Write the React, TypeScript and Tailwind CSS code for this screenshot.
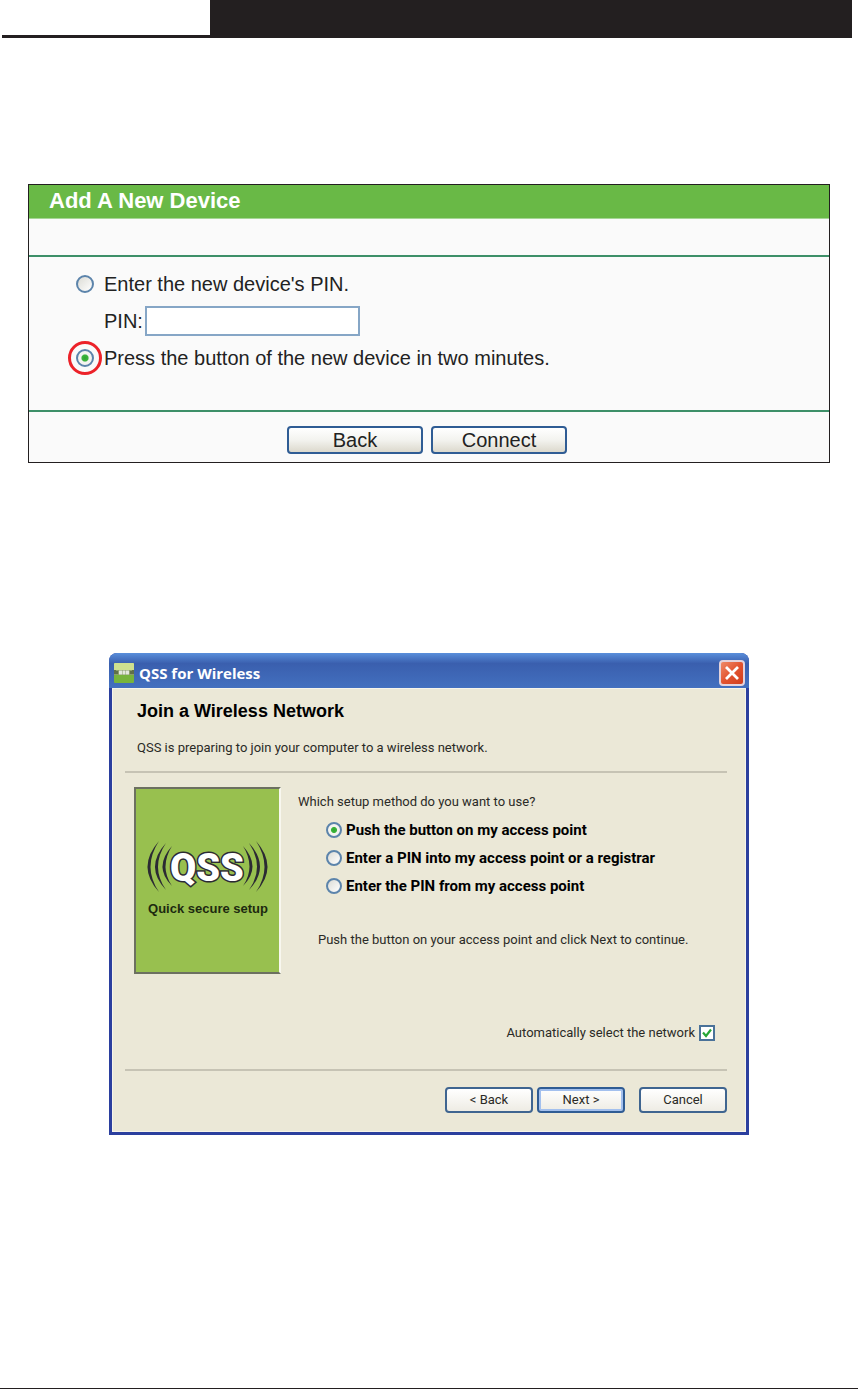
import { useState } from 'react'
import type { ReactNode } from 'react'

const methods = [
  { id: 'push', label: 'Push the button on my access point' },
  { id: 'enter', label: 'Enter a PIN into my access point or a registrar' },
  { id: 'from', label: 'Enter the PIN from my access point' },
]

const radioBase =
  'shrink-0 appearance-none rounded-full border-2 border-[#5c84ab] bg-[linear-gradient(135deg,#dcdcd6,#ffffff)] checked:bg-[radial-gradient(circle,#2fa52f_0,#3cb43c_30%,#f4f4f0_42%)]'

function WideButton({ children }: { children: ReactNode }) {
  return (
    <button
      type="button"
      className="h-7 w-34 rounded-[4px] border-2 border-[#2f5c94] bg-linear-to-b from-white via-[#f3f3ef] to-[#dcd9cd] text-xl leading-5 text-[#222]"
    >
      {children}
    </button>
  )
}

function DialogButton({ children, primary = false }: { children: ReactNode; primary?: boolean }) {
  return (
    <button
      type="button"
      className={
        primary
          ? 'h-[26px] w-22 rounded-[4px] border-2 border-[#2f5c94] bg-linear-to-b from-white to-[#eeece4] leading-5 inset-ring-2 inset-ring-[#a3c0ee]'
          : 'h-[26px] w-22 rounded-[4px] border-2 border-[#3f6590] bg-linear-to-b from-white to-[#eeece4] leading-5'
      }
    >
      {children}
    </button>
  )
}

function Rule() {
  return <hr className="mr-[18px] ml-1 border-t-2 border-[#c6c3b4]" />
}

function AddDevice() {
  const [mode, setMode] = useState('button')

  return (
    <section className="mx-7 border border-[#231f20] bg-[#fafafa] font-['Liberation_Sans',sans-serif] text-xl text-[#222]">
      <h1 className="h-[34px] border-b border-[#a5d695] bg-[#69b946] px-5 text-[22px] leading-8 font-bold text-white">
        Add A New Device
      </h1>
      <div className="h-9" />
      <div className="border-y-2 border-[#3d8f68] pt-2 pb-[34px] pl-[47px]">
        <div className="flex h-[37px] items-center gap-2.5">
          <input
            id="mode-pin"
            type="radio"
            name="mode"
            checked={mode === 'pin'}
            onChange={() => setMode('pin')}
            className={`size-[18px] ${radioBase}`}
          />
          <label htmlFor="mode-pin">Enter the new device's PIN.</label>
        </div>
        <div className="flex h-[37px] items-center gap-0.5 pl-7">
          <label htmlFor="pin">PIN:</label>
          <input id="pin" type="text" className="h-[30px] w-[215px] border-2 border-[#86a6c6] bg-white px-1" />
        </div>
        <div className="flex h-[37px] items-center gap-2.5">
          <span className="relative flex">
            <input
              id="mode-button"
              type="radio"
              name="mode"
              checked={mode === 'button'}
              onChange={() => setMode('button')}
              className={`size-[18px] ${radioBase}`}
            />
            {/* red marker ring */}
            <span className="pointer-events-none absolute -inset-2 rounded-full border-3 border-[#ec2229]" />
          </span>
          <label htmlFor="mode-button">Press the button of the new device in two minutes.</label>
        </div>
      </div>
      <div className="flex justify-center gap-2 pt-3.5 pr-1 pb-2">
        <WideButton>Back</WideButton>
        <WideButton>Connect</WideButton>
      </div>
    </section>
  )
}

function QssBanner() {
  return (
    <div className="h-[187px] w-[147px] shrink-0 border-2 border-t-[#6c7060] border-r-[#f8f7ef] border-b-[#6c7060] border-l-[#6c7060] bg-[#98c04f]">
      <svg viewBox="0 0 143 183" className="block size-full" role="img" aria-label="QSS Quick secure setup">
        <g fill="#2b2a33">
          <path d="M23 52 Q0 78 23 103 Q6 78 23 52Z" />
          <path d="M30 54 Q8 78 30 101 Q14 78 30 54Z" />
          <path d="M36 57 Q17 78 36 97 Q23 78 36 57Z" />
          <path d="M120 52 Q143 78 120 103 Q137 78 120 52Z" />
          <path d="M113 54 Q135 78 113 101 Q129 78 113 54Z" />
          <path d="M107 57 Q126 78 107 97 Q120 78 107 57Z" />
        </g>
        <text
          x="71"
          y="92"
          textAnchor="middle"
          fill="#fff"
          stroke="#2b2a33"
          strokeWidth="3"
          paintOrder="stroke"
          className="font-[Roboto,sans-serif] text-[38px] font-black"
        >
          QSS
        </text>
        <text
          x="72"
          y="124"
          textAnchor="middle"
          fill="#1d2a10"
          className="font-['Liberation_Sans'] text-[13px] font-bold"
        >
          Quick secure setup
        </text>
      </svg>
    </div>
  )
}

function TitleBar() {
  return (
    <div className="flex h-[35px] items-center bg-linear-to-b from-[#5a8fdb] via-[#3a5fae] via-30% to-[#4370bf] pt-1 pr-1 pl-[5px]">
      <svg viewBox="0 0 20 20" className="size-5" aria-hidden="true">
        <rect width="20" height="20" rx="1" fill="#78b43c" />
        <rect width="20" height="8" rx="1" fill="#cfe08f" />
        <rect y="7" width="20" height="5" fill="#8d9f6a" />
        <path d="M1 7v4M3 8v3M17 8v3M19 7v4" stroke="#33422a" />
        <path d="M5 9.500h10" stroke="#e4e8dc" strokeWidth="4" strokeDasharray="3 .5" />
      </svg>
      <h2 className="ml-[5px] flex-1 font-['Open_Sans'] text-[15px] leading-5 font-bold text-white">
        QSS for Wireless
      </h2>
      <button
        type="button"
        aria-label="Close"
        className="size-[26px] rounded-[4px] border-2 border-[#e3d3dc] bg-linear-to-br from-[#ee8a68] via-[#e2532f] to-[#d03c1c]"
      >
        <svg viewBox="0 0 22 22" className="block size-full" aria-hidden="true">
          <path d="M5 5l12 12M17 5L5 17" stroke="#fff" strokeWidth="2.8" />
        </svg>
      </button>
    </div>
  )
}

function QssWizard() {
  const [method, setMethod] = useState('push')
  const [auto, setAuto] = useState(true)

  return (
    <section className="mx-auto w-full max-w-[640px] overflow-hidden rounded-t-lg bg-[#2b3f9e] font-[Roboto,sans-serif] text-[13px] leading-5 text-[#2a2a26]">
      <TitleBar />
      <div className="mx-[3px] mb-[3px] border border-[#f6f4ea] bg-[#ebe8d7] pl-2">
        <div className="pt-3 pb-[13px] pl-4">
          <h3 className="font-['Liberation_Sans',sans-serif] text-lg leading-5 font-bold text-black">
            Join a Wireless Network
          </h3>
          <p className="mt-[17px]">QSS is preparing to join your computer to a wireless network.</p>
        </div>
        <Rule />
        <div className="flex pt-3.5 pl-[13px]">
          <QssBanner />
          <div className="pl-[17px]">
            <p className="mt-[5px] mb-1">Which setup method do you want to use?</p>
            {methods.map((item) => (
              <div key={item.id} className="flex h-7 items-center gap-1 pl-7">
                <input
                  id={item.id}
                  type="radio"
                  name="method"
                  checked={method === item.id}
                  onChange={() => setMethod(item.id)}
                  className={`size-4 ${radioBase}`}
                />
                <label htmlFor={item.id} className="text-[15px] font-bold text-black">
                  {item.label}
                </label>
              </div>
            ))}
            <p className="mt-[30px] pl-5">Push the button on your access point and click Next to continue.</p>
          </div>
        </div>
        <div className="flex items-center justify-end gap-1 pt-[49px] pr-[30px]">
          <label htmlFor="auto">Automatically select the network</label>
          <span className="relative flex">
            <input
              id="auto"
              type="checkbox"
              checked={auto}
              onChange={() => setAuto(!auto)}
              className="size-4 appearance-none border-2 border-[#4a7299] bg-white"
            />
            {auto && (
              <svg viewBox="0 0 16 16" className="pointer-events-none absolute inset-0" aria-hidden="true">
                <path d="M4 7.500l3 3.500 5-6.500" fill="none" stroke="#27a636" strokeWidth="2.2" />
              </svg>
            )}
          </span>
        </div>
        <div className="pt-[26px]">
          <Rule />
        </div>
        <div className="flex justify-end gap-1 pt-4 pr-[18px] pb-[18px]">
          <DialogButton>&lt; Back</DialogButton>
          <DialogButton primary>Next &gt;</DialogButton>
          <div className="ml-2.5">
            <DialogButton>Cancel</DialogButton>
          </div>
        </div>
      </div>
    </section>
  )
}

export default function App() {
  return (
    <div className="flex min-h-screen flex-col bg-white">
      <header className="mr-1.5 ml-0.5 flex h-[38px] border-b-3 border-[#231f20]">
        <div className="w-52" />
        <div className="flex-1 bg-[#231f20]" />
      </header>
      <main className="flex-1 pt-[146px]">
        <AddDevice />
        <div className="pt-[190px]">
          <QssWizard />
        </div>
      </main>
      <footer className="border-t border-[#231f20]" />
    </div>
  )
}
